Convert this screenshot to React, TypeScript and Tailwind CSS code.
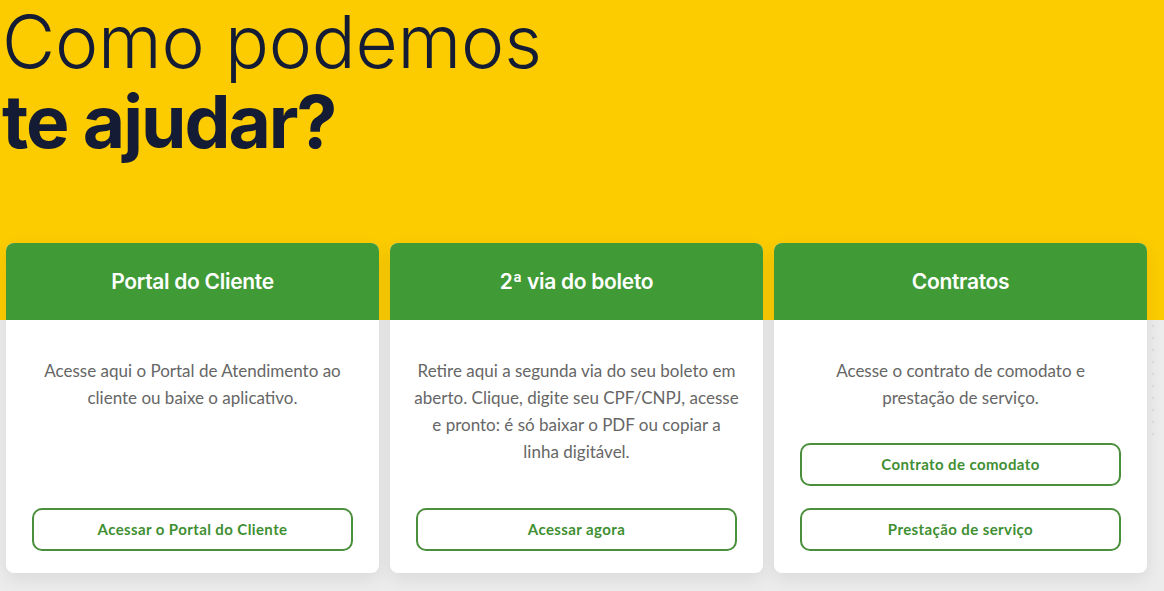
const CARDS = [
  {
    title: "Portal do Cliente",
    text: "Acesse aqui o Portal de Atendimento ao cliente ou baixe o aplicativo.",
    buttons: ["Acessar o Portal do Cliente"],
    wide: false,
  },
  {
    title: "2ª via do boleto",
    text: "Retire aqui a segunda via do seu boleto em aberto. Clique, digite seu CPF/CNPJ, acesse e pronto: é só baixar o PDF ou copiar a linha digitável.",
    buttons: ["Acessar agora"],
    wide: true,
  },
  {
    title: "Contratos",
    text: "Acesse o contrato de comodato e prestação de serviço.",
    buttons: ["Contrato de comodato", "Prestação de serviço"],
    wide: false,
  },
];

function Card({ title, text, buttons, wide }: (typeof CARDS)[number]) {
  return (
    <div className="flex flex-col rounded-[8px] bg-white shadow-[0_6px_18px_rgba(0,0,0,0.08)]">
      <div className="flex h-[77px] items-center justify-center rounded-t-[8px] bg-[#409a36]">
        <h2 className="font-['Inter',sans-serif] text-[21px] font-semibold tracking-[-0.3px] text-white">
          {title}
        </h2>
      </div>
      <div className="flex flex-1 flex-col px-[26px] pb-[22px] pt-[37px]">
        <p
          className={
            wide
              ? "-mx-[3px] text-center font-['Lato',sans-serif] text-[17px] leading-[27px] text-[#666]"
              : "text-center font-['Lato',sans-serif] text-[17px] leading-[27px] text-[#666]"
          }
        >
          {text}
        </p>
        <div className="mt-auto flex flex-col gap-[22px]">
          {buttons.map((b) => (
            <button
              key={b}
              className="h-[43px] rounded-[10px] border-2 border-[#4a8f3c] bg-white font-['Lato',sans-serif] text-[15px] font-bold tracking-[0.4px] text-[#3f8f33]"
            >
              {b}
            </button>
          ))}
        </div>
      </div>
    </div>
  );
}

export default function App() {
  return (
    <div className="relative h-[591px] w-[1164px] overflow-hidden bg-[linear-gradient(to_bottom,#fccc00_320px,#ececec_320px)]">
      <div className="absolute right-0 top-[320px] h-[120px] w-[17px] bg-[radial-gradient(#dcdcdc_1px,transparent_1.5px)] bg-[length:12px_12px]" />
      <div className="relative pl-[2px] pt-[2px]">
        <h1 className="font-['Inter',sans-serif] text-[73px] leading-[80px] tracking-[-0.2px] text-[#141b34]">
          <span className="block font-light">Como podemos</span>
          <span className="block font-bold tracking-[-2px]">te ajudar?</span>
        </h1>
      </div>
      <div className="relative mt-[81px] grid grid-cols-3 gap-[11px] pl-[6px] pr-[17px]">
        {CARDS.map((c) => (
          <div key={c.title} className="flex h-[330px] flex-col [&>div]:flex-1">
            <Card {...c} />
          </div>
        ))}
      </div>
    </div>
  );
}
